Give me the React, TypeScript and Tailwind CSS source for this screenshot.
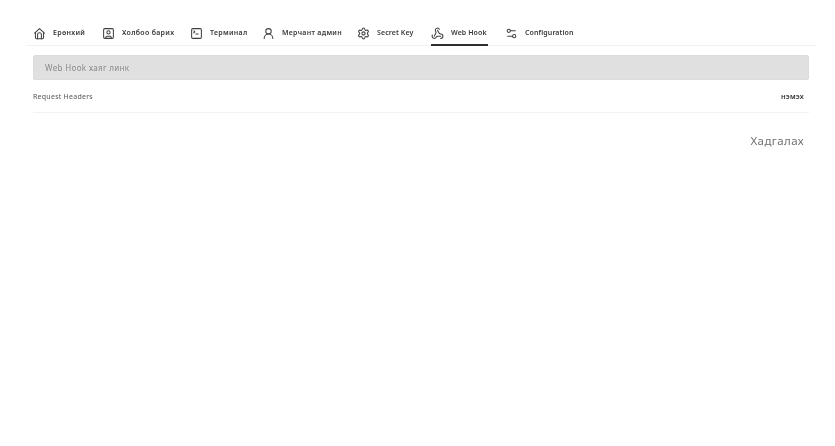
import { SquareUser, SquareTerminal, UserRound, Settings, Webhook, Settings2 } from "lucide-react";
import type { ComponentType } from "react";

type IconProps = { size?: number; strokeWidth?: number; className?: string };

function HomeArch({ size = 13, strokeWidth = 2, className }: IconProps) {
  return (
    <svg width={size} height={size} viewBox="0 0 24 24" fill="none" stroke="currentColor" strokeWidth={strokeWidth} strokeLinecap="round" strokeLinejoin="round" className={className}>
      <path d="M3 11.5 12 3l9 8.5" />
      <path d="M4.5 10v9.5a2 2 0 0 0 2 2h11a2 2 0 0 0 2-2V10" />
      <path d="M8.5 21.5V14a3.5 3.5 0 0 1 7 0v7.5" />
    </svg>
  );
}

const tabs: { label: string; Icon: ComponentType<IconProps>; w: string; t: string; active?: boolean }[] = [
  { label: "Ерөнхий", Icon: HomeArch, w: "w-[32px]", t: "tracking-[0.3px]" },
  { label: "Холбоо барих", Icon: SquareUser, w: "w-[51px]", t: "tracking-[0.3px]" },
  { label: "Терминал", Icon: SquareTerminal, w: "w-[35px]", t: "tracking-[0.3px]" },
  { label: "Мерчант админ", Icon: UserRound, w: "w-[58px]", t: "tracking-[0.3px]" },
  { label: "Secret Key", Icon: Settings, w: "w-[37px]", t: "tracking-[0.1px]" },
  { label: "Web Hook", Icon: Webhook, w: "w-[37px]", t: "tracking-[0.1px]", active: true },
  { label: "Configuration", Icon: Settings2, w: "w-[48px]", t: "tracking-[0.1px]" },
];

export default function App() {
  return (
    <div className="h-[446px] w-[835px] overflow-hidden bg-white px-[26px] pt-[21px] font-['Noto_Sans',sans-serif] text-[#3a3a3a] blur-[0.35px]">
      <nav className="flex h-[25px] w-[791px] gap-[17px] border-b border-[#f1f1f1] px-[7px]">
        {tabs.map(({ label, Icon, w, t, active }) => (
          <div
            key={label}
            className={`flex h-[25px] items-center gap-[7px] border-b-2 pt-[2px] ${active ? "border-[#2e2e2e]" : "border-transparent"}`}
          >
            <Icon size={13} strokeWidth={1.9} className="shrink-0 text-[#3f3f3f]" />
            <span className={`${w} ${t} whitespace-nowrap text-[7px] font-semibold`}>{label}</span>
          </div>
        ))}
      </nav>
      <div className="px-[7px]">
        <div className="mt-[9px] flex h-[25px] w-[776px] items-center rounded-[2px] border border-[#dcdcdc] bg-[#e0e0e0] px-[11px] text-[8px] tracking-[0.35px] text-[#8a8a8a]">
          Web Hook хаяг линк
        </div>
        <div className="flex h-[33px] w-[776px] items-center justify-between border-b border-[#f2f2f2] pr-[5px] pt-[2px] text-[7px]">
          <span className="tracking-[0.25px] text-[#555555]">Request Headers</span>
          <span className="text-[6px] font-bold tracking-[0.2px] text-[#333333]">НЭМЭХ</span>
        </div>
        <div className="mt-[19px] flex w-[776px] justify-end pr-[5px] text-[11.5px] tracking-[0.4px] text-[#707070]">
          Хадгалах
        </div>
      </div>
    </div>
  );
}
